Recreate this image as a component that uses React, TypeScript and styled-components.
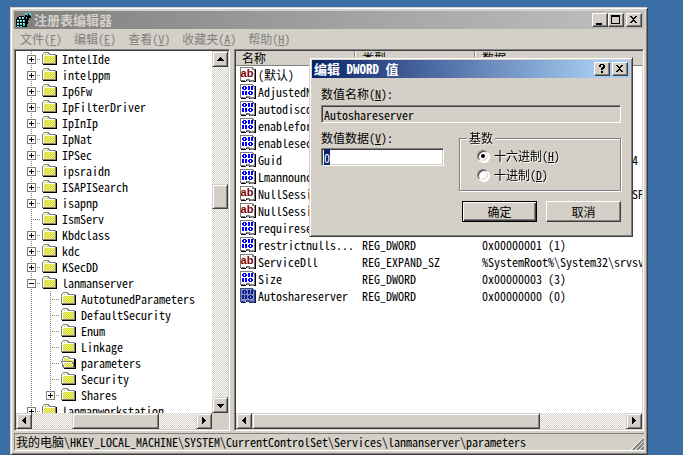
import React from "react";
import styled, { createGlobalStyle, css } from "styled-components";

const face = "#d4d0c8";
const shadow = "#808080";
const dark = "#404040";

const GlobalStyle = createGlobalStyle`
  *, *::before, *::after { box-sizing: border-box; }
  body { margin: 0; background: #3a6ea5; }
  body, button, input, table {
    font-family: "Noto Sans Mono CJK SC", "Noto Sans CJK SC", "Liberation Mono", monospace;
    font-size: 12px;
    line-height: 16px;
    color: #000;
  }
`;

const raised = css`
  border: 1px solid;
  border-color: ${face} ${dark} ${dark} ${face};
  box-shadow: inset 1px 1px 0 #fff, inset -1px -1px 0 ${shadow};
`;

const checker = css`
  background: conic-gradient(#fff 25%, ${face} 0 50%, #fff 0 75%, ${face} 0) 0 0 / 2px 2px;
`;

const Desktop = styled.div`
  position: relative;
  display: flex;
  min-height: 100vh;
  height: 100vh;
  padding: 7px 35px 0 10px;
  overflow: hidden;
`;

const Window = styled.main`
  flex: 1;
  min-width: 0;
  display: flex;
  flex-direction: column;
  padding: 3px;
  background: ${face};
  ${raised}
`;

const TitleBar = styled.header<{ $active?: boolean }>`
  display: flex;
  align-items: center;
  flex: none;
  height: 18px;
  padding: 0 2px;
  background: ${(p) =>
    p.$active
      ? "linear-gradient(90deg, #0a246a, #a6caf0 90%)"
      : "linear-gradient(90deg, #808080, #c0c0c0)"};
  color: ${(p) => (p.$active ? "#fff" : face)};
`;

const Title = styled.h1`
  flex: 1;
  margin: 0;
  font-size: 13px;
  line-height: 18px;
  font-weight: 700;
  white-space: nowrap;
`;

const AppIcon = styled.svg`
  flex: none;
  width: 16px;
  height: 16px;
  margin-right: 2px;
`;

const CaptionButton = styled.button<{ $apart?: boolean }>`
  display: flex;
  flex: none;
  width: 16px;
  height: 14px;
  padding: 0;
  margin-left: ${(p) => (p.$apart ? 2 : 0)}px;
  background: ${face};
  border: 1px solid;
  border-color: #fff ${dark} ${dark} #fff;
  box-shadow: inset -1px -1px 0 ${shadow};
`;

const MenuBar = styled.nav`
  display: flex;
  flex: none;
  height: 20px;
`;

const MenuItem = styled.button`
  padding: 0 6px;
  border: 0;
  background: none;
  color: ${shadow};
  line-height: 20px;
  white-space: nowrap;
`;

const Panes = styled.div`
  flex: 1;
  min-height: 0;
  display: flex;
  gap: 4px;
`;

const Pane = styled.section<{ $width?: number }>`
  flex: ${(p) => (p.$width ? `0 0 ${p.$width}px` : "1 1 0")};
  min-width: 0;
  display: grid;
  grid-template-columns: minmax(0, 1fr) auto;
  grid-template-rows: minmax(0, 1fr) 16px;
  background: #fff;
  border: 1px solid;
  border-color: ${shadow} #fff #fff ${shadow};
  padding: 1px;
  box-shadow: inset 1px 1px 0 ${dark}, inset -1px -1px 0 ${face};
`;

const PaneBody = styled.div`
  overflow: hidden;
`;

const Corner = styled.div`
  background: ${face};
`;

const Bar = styled.div<{ $vertical?: boolean }>`
  display: flex;
  flex-direction: ${(p) => (p.$vertical ? "column" : "row")};
  ${(p) => (p.$vertical ? "width: 16px;" : "height: 16px;")}
  ${checker}
`;

const ArrowButton = styled.button`
  display: flex;
  flex: none;
  width: 16px;
  height: 16px;
  padding: 0;
  background: ${face};
  ${raised}
`;

const Space = styled.div<{ $grow: number }>`
  flex: ${(p) => p.$grow} 1 0;
`;

const Thumb = styled.div<{ $grow: number }>`
  flex: ${(p) => p.$grow} 1 0;
  background: ${face};
  ${raised}
`;

const Tree = styled.ul`
  margin: 0;
  padding: 0 0 0 6px;
  list-style: none;
`;

const TreeItem = styled.li`
  display: flex;
  height: 16px;
  white-space: nowrap;
`;

const Guide = styled.span<{ $half?: boolean; $branch?: boolean }>`
  flex: none;
  display: flex;
  align-items: center;
  width: 19px;
  height: 16px;
  padding-left: 5px;
  background-image: repeating-linear-gradient(180deg, ${shadow} 0 1px, transparent 1px 2px),
    repeating-linear-gradient(90deg, ${shadow} 0 1px, transparent 1px 2px);
  background-repeat: no-repeat;
  background-position: 9px 0, 9px 8px;
  background-size: 1px ${(p) => (p.$half ? 8 : 16)}px, ${(p) => (p.$branch ? "10px 1px" : "0 0")};
`;

const Expander = styled.button`
  display: flex;
  width: 9px;
  height: 9px;
  margin-top: 1px;
  padding: 0;
  background: #fff;
  border: 1px solid ${shadow};
`;

const FolderArt = styled.svg`
  flex: none;
  width: 18px;
  height: 16px;
  margin-right: 3px;
`;

const Table = styled.table`
  width: 100%;
  table-layout: fixed;
  border-spacing: 0;
`;

const HeadCell = styled.th<{ $width?: number }>`
  width: ${(p) => (p.$width ? `${p.$width}px` : "auto")};
  height: 15px;
  padding: 0 6px;
  overflow: hidden;
  background: ${face};
  border-bottom: 1px solid ${shadow};
  box-shadow: ${(p) => (p.$width ? `inset -1px 0 0 #fff, inset -2px 0 0 ${shadow}` : "none")};
  line-height: 14px;
  font-weight: 400;
  text-align: left;
`;

const Cell = styled.td`
  height: 17px;
  padding: 0 0 0 6px;
  overflow: hidden;
  line-height: 17px;
  white-space: pre;
`;

const NameCell = styled(Cell)`
  padding-left: 4px;
`;

const NameBox = styled.span`
  display: flex;
  gap: 2px;
`;

const ValueArt = styled.svg`
  flex: none;
  width: 16px;
  height: 17px;
`;

const StatusBar = styled.footer`
  flex: none;
  display: flex;
  align-items: flex-end;
  justify-content: space-between;
  height: 18px;
  margin-top: 2px;
  padding-left: 1px;
  border: 1px solid;
  border-color: ${shadow} #fff #fff ${shadow};
  border-right: 0;
  white-space: nowrap;
`;

const Grip = styled.svg`
  flex: none;
  width: 13px;
  height: 13px;
`;

const Dialog = styled.div`
  position: absolute;
  top: 57px;
  left: 309px;
  width: 324px;
  padding: 2px;
  background: ${face};
  ${raised}
`;

const Form = styled.form`
  display: flex;
  flex-direction: column;
  padding: 8px 9px 12px;
`;

const Label = styled.label`
  height: 16px;
  white-space: nowrap;
`;

const Field = styled.input`
  width: 100%;
  height: 18px;
  padding: 0 2px;
  margin: 0;
  border: 1px solid;
  border-color: ${shadow} #fff #fff ${shadow};
  border-radius: 0;
  box-shadow: inset 1px 1px 0 ${dark}, inset -1px -1px 0 ${face};
  background: #fff;
  outline: none;
  &:read-only { background: ${face}; }
  &::selection { background: #0a246a; color: #fff; }
`;

const NameRow = styled.div`
  display: flex;
  flex-direction: column;
  gap: 3px;
`;

const DataRow = styled.div`
  display: flex;
  gap: 15px;
  margin-top: 7px;
`;

const DataColumn = styled.div`
  flex: 1;
  display: flex;
  flex-direction: column;
  gap: 2px;
`;

const Radix = styled.fieldset`
  width: 162px;
  height: 61px;
  margin: 0;
  padding: 0 17px;
  border: 1px solid ${shadow};
`;

const RadixFrame = styled.div`
  flex: none;
  filter: drop-shadow(1px 1px 0 #fff);
`;

const Legend = styled.legend`
  margin-left: -10px;
  padding: 0 2px;
`;

const Option = styled.label`
  display: flex;
  align-items: center;
  gap: 5px;
  height: 19px;
  white-space: nowrap;
`;

const Radio = styled.input`
  appearance: none;
  display: grid;
  place-items: center;
  width: 12px;
  height: 12px;
  margin: 0;
  border: 1px solid;
  border-color: ${shadow} #fff #fff ${shadow};
  border-radius: 50%;
  background: #fff;
  box-shadow: inset 1px 1px 0 ${dark}, inset -1px -1px 0 ${face};
  &:checked::before {
    content: "";
    width: 4px;
    height: 4px;
    border-radius: 50%;
    background: #000;
  }
`;

const Actions = styled.div`
  display: flex;
  justify-content: flex-end;
  gap: 9px;
  margin-top: 10px;
`;

const PushButton = styled.button<{ $default?: boolean }>`
  width: 75px;
  height: 21px;
  padding: 0;
  background: ${face};
  border: 1px solid;
  border-color: ${(p) => (p.$default ? "#000" : `#fff ${dark} ${dark} #fff`)};
  box-shadow: ${(p) =>
    p.$default
      ? `inset 1px 1px 0 #fff, inset -1px -1px 0 ${dark}, inset -2px -2px 0 ${shadow}`
      : `inset -1px -1px 0 ${shadow}`};
`;

const glyphs = {
  up: "M7 5h1v1h1v1h1v1h1v1H4V8h1V7h1V6h1z",
  down: "M4 6h7v1h-1v1H9v1H8v1H7V9H6V8H5V7H4z",
  left: "M8 3h1v7H8V9H7V8H6V7H5V6h1V5h1V4h1z",
  right: "M5 3h1v1h1v1h1v1h1v1H8v1H7v1H6v1H5z",
  min: "M3 9h6v2H3z",
  max: "M2 1h9v9H2zM3 3v6h7V3z",
  close: "M3 2h2v1h1v1h1V3h1V2h2v1H9v1H8v1H7v1h1v1h1v1h1v1H8V8H7V7H6v1H5v1H3V8h1V7h1V6h1V5H5V4H4V3H3z",
  help: "M5 1h4v1h1v3H9v1H8v1H6V5h1V4h1V2H6v2H4V2h1zM6 8h2v2H6z",
};

const Glyph = ({ kind }: { kind: keyof typeof glyphs }) => (
  <svg width="14" height="12" viewBox="0 0 14 12" overflow="visible" shapeRendering="crispEdges">
    <path d={glyphs[kind]} fillRule="evenodd" />
  </svg>
);

const Folder = ({ open }: { open?: boolean }) => (
  <FolderArt viewBox="0 0 18 16" shapeRendering="crispEdges" aria-hidden="true">
    <defs>
      <pattern id="weave" width="2" height="2" patternUnits="userSpaceOnUse">
        <path d="M0 0h2v2H0z" fill="#ff0" />
        <path d="M1 0h1v1H1zM0 1h1v1H0z" fill="#c8c8b0" />
      </pattern>
    </defs>
    {open ? (
      <>
        <path d="M3 1h6v1h1v1h5v10H3V12H2V3h1z" fill={shadow} />
        <path d="M4 2h4v1h1v1h5v3H3V3h1z" fill="#fff" />
        <path d="M4 3h4v1h1v1h5v2H4z" fill="url(#weave)" />
        <path d="M14 4h2v10H4v-1h10z" fill="#000" />
        <path d="M1 6h11v1h1v2h1v3h1v1H4v-1H3v-2H2V8H1z" fill={shadow} />
        <path d="M2 7h10v2h1v3H4v-2H3V8H2z" fill="#fff" />
        <path d="M4 8h8v2h1v2H5v-2H4z" fill="url(#weave)" />
      </>
    ) : (
      <>
        <path d="M2 4h14v10H2z" fill="#000" />
        <path d="M3 1h5v1h1v1h6v10H1V3h1V2h1z" fill={shadow} />
        <path d="M3 2h4v1h1v1h6v8H2V3h1z" fill="#fff" />
        <path d="M3 3h4v1H3zM3 5h11v7H3z" fill="url(#weave)" />
      </>
    )}
  </FolderArt>
);

const ValueIcon = ({ kind, selected }: { kind: "ab" | "bin"; selected?: boolean }) => {
  const ink = selected ? "#0a1a90" : "#0000ff";
  return (
    <ValueArt viewBox="0 0 16 17" shapeRendering="crispEdges" aria-hidden="true">
      <path d="M1 15h5v1H1zM6 14h3v1H6zM9 15h4v1H9zM14 3h2v13h-3v-1h1z" fill={selected ? "#0a1a50" : "#000"} />
      <path d="M0 1h13v1h1v1h1v12h-1v1h-4v-1H7v-1H5v1H0z" fill={selected ? "#3a4a88" : shadow} />
      <path d="M1 2h11v2h2v10h-4v-1H6v1H1z" fill={selected ? "#8090c0" : "#fff"} />
      {kind === "ab" ? (
        <text
          x="7"
          y="11"
          textAnchor="middle"
          fontFamily="Liberation Sans, sans-serif"
          fontWeight="700"
          fontSize="11"
          fill="#800000"
        >
          ab
        </text>
      ) : (
        <path
          fill={ink}
          fillRule="evenodd"
          d="M3 3h3v1h1v2H6v1H3V6H2V4h1zM4 4v2h1V4zM8 3h2v4H8zM11 3h2v4h-2zM2 8h2v4H2zM5 8h2v4H5zM9 8h3v1h1v2h-1v1H9v-1H8V9h1zM10 9v2h1V9z"
        />
      )}
    </ValueArt>
  );
};

const ScrollBar = ({ vertical, parts }: { vertical?: boolean; parts: [number, number, number] }) => (
  <Bar $vertical={vertical}>
    <ArrowButton type="button" aria-label={vertical ? "向上" : "向左"}>
      <Glyph kind={vertical ? "up" : "left"} />
    </ArrowButton>
    <Space $grow={parts[0]} />
    <Thumb $grow={parts[1]} />
    <Space $grow={parts[2]} />
    <ArrowButton type="button" aria-label={vertical ? "向下" : "向右"}>
      <Glyph kind={vertical ? "down" : "right"} />
    </ArrowButton>
  </Bar>
);

const menus = [
  ["文件", "F"],
  ["编辑", "E"],
  ["查看", "V"],
  ["收藏夹", "A"],
  ["帮助", "H"],
];

type Node = { name: string; sign?: "+" | "-"; child?: boolean; open?: boolean; last?: boolean };

const nodes: Node[] = [
  { name: "IntelIde", sign: "+" },
  { name: "intelppm", sign: "+" },
  { name: "Ip6Fw", sign: "+" },
  { name: "IpFilterDriver", sign: "+" },
  { name: "IpInIp", sign: "+" },
  { name: "IpNat", sign: "+" },
  { name: "IPSec", sign: "+" },
  { name: "ipsraidn", sign: "+" },
  { name: "ISAPISearch", sign: "+" },
  { name: "isapnp", sign: "+" },
  { name: "IsmServ" },
  { name: "Kbdclass", sign: "+" },
  { name: "kdc", sign: "+" },
  { name: "KSecDD", sign: "+" },
  { name: "lanmanserver", sign: "-" },
  { name: "AutotunedParameters", child: true },
  { name: "DefaultSecurity", child: true },
  { name: "Enum", child: true },
  { name: "Linkage", child: true },
  { name: "parameters", child: true, open: true },
  { name: "Security", child: true },
  { name: "Shares", child: true, sign: "+", last: true },
  { name: "lanmanworkstation", sign: "+" },
];

type Value = { kind: "ab" | "bin"; name: string; type: string; data: string; selected?: boolean };

const values: Value[] = [
  { kind: "ab", name: "(默认)", type: "REG_SZ", data: "(数值未设置)" },
  { kind: "bin", name: "AdjustedNulls...", type: "REG_DWORD", data: "0x00000001 (1)" },
  { kind: "bin", name: "autodisconnect", type: "REG_DWORD", data: "0x0000000f (15)" },
  { kind: "bin", name: "enableforced...", type: "REG_DWORD", data: "0x00000000 (0)" },
  { kind: "bin", name: "enablesecuri...", type: "REG_DWORD", data: "0x00000000 (0)" },
  { kind: "bin", name: "Guid", type: "REG_BINARY", data: "a1 5c 90 3e b7 42 d8 11 94 0f" },
  { kind: "bin", name: "Lmannounce", type: "REG_DWORD", data: "0x00000000 (0)" },
  { kind: "ab", name: "NullSessionP...", type: "REG_MULTI_SZ", data: "COMNAP COMNODE SQL\\QUERY SPOOLSS" },
  { kind: "ab", name: "NullSessionS...", type: "REG_MULTI_SZ", data: "COMCFG DFS$" },
  { kind: "bin", name: "requiresecur...", type: "REG_DWORD", data: "0x00000000 (0)" },
  { kind: "bin", name: "restrictnulls...", type: "REG_DWORD", data: "0x00000001 (1)" },
  { kind: "ab", name: "ServiceDll", type: "REG_EXPAND_SZ", data: "%SystemRoot%\\System32\\srvsvc.dll" },
  { kind: "bin", name: "Size", type: "REG_DWORD", data: "0x00000003 (3)" },
  { kind: "bin", name: "Autoshareserver", type: "REG_DWORD", data: "0x00000000 (0)", selected: true },
];

const selectAll = (el: HTMLInputElement | null) => {
  if (el) {
    el.focus();
    el.select();
  }
};

export default function App() {
  return (
    <Desktop>
      <GlobalStyle />
      <Window>
        <TitleBar>
          <AppIcon viewBox="0 0 16 16" shapeRendering="crispEdges" aria-hidden="true">
            <path d="M3 4h5v1h2v3h1v7H0V7h1V5h2z" fill="#000" />
            <path d="M9 1h2v3h1V2h2v2h1v2h-2v2h-1v4h-1v2h-1V6H9z" fill="#000" />
            <path
              fill="#2fe0e0"
              d="M3 5h2v2H3zM6 5h2v2H6zM1 8h2v2H1zM4 8h2v2H4zM7 8h2v2H7zM1 11h2v2H1zM4 11h2v2H4zM7 11h2v3H7zM1 14h2v1H1zM4 14h2v1H4zM9 1h2v2H9zM13 1h2v2h-2zM10 5h1v2h-1z"
            />
            <path fill="#fff" d="M3 5h1v1H3zM6 5h1v1H6zM1 8h1v1H1zM4 8h1v1H4zM7 8h1v1H7zM1 11h1v1H1zM4 11h1v1H4zM7 11h1v1H7z" />
          </AppIcon>
          <Title>注册表编辑器</Title>
          <CaptionButton type="button" aria-label="最小化">
            <Glyph kind="min" />
          </CaptionButton>
          <CaptionButton type="button" aria-label="最大化">
            <Glyph kind="max" />
          </CaptionButton>
          <CaptionButton type="button" aria-label="关闭" $apart>
            <Glyph kind="close" />
          </CaptionButton>
        </TitleBar>
        <MenuBar>
          {menus.map(([name, key]) => (
            <MenuItem type="button" key={key}>
              {name}(<u>{key}</u>)
            </MenuItem>
          ))}
        </MenuBar>
        <Panes>
          <Pane $width={216}>
            <PaneBody>
              <Tree>
                {nodes.map((n) => {
                  const box = n.sign && (
                    <Expander type="button" aria-label={n.sign === "+" ? "展开" : "折叠"}>
                      <svg width="7" height="7" viewBox="0 0 7 7" shapeRendering="crispEdges">
                        <path d={n.sign === "+" ? "M1 3h5v1H1zM3 1h1v5H3z" : "M1 3h5v1H1z"} />
                      </svg>
                    </Expander>
                  );
                  return (
                    <TreeItem key={n.name}>
                      <Guide $branch={!n.child}>{!n.child && box}</Guide>
                      {n.child && (
                        <Guide $branch $half={n.last}>
                          {box}
                        </Guide>
                      )}
                      <Folder open={n.open} />
                      {n.name}
                    </TreeItem>
                  );
                })}
              </Tree>
            </PaneBody>
            <ScrollBar vertical parts={[118, 23, 189]} />
            <ScrollBar parts={[40, 87, 37]} />
            <Corner />
          </Pane>
          <Pane>
            <PaneBody>
              <Table>
                <thead>
                  <tr>
                    <HeadCell $width={120}>名称</HeadCell>
                    <HeadCell $width={120}>类型</HeadCell>
                    <HeadCell>数据</HeadCell>
                  </tr>
                </thead>
                <tbody>
                  {values.map((v) => (
                    <tr key={v.name}>
                      <NameCell>
                        <NameBox>
                          <ValueIcon kind={v.kind} selected={v.selected} />
                          {v.name}
                        </NameBox>
                      </NameCell>
                      <Cell>{v.type}</Cell>
                      <Cell>{v.data}</Cell>
                    </tr>
                  ))}
                </tbody>
              </Table>
            </PaneBody>
            <div />
            <ScrollBar parts={[0, 288, 86]} />
          </Pane>
        </Panes>
        <StatusBar>
          <span>我的电脑\HKEY_LOCAL_MACHINE\SYSTEM\CurrentControlSet\Services\lanmanserver\parameters</span>
          <Grip viewBox="0 0 13 13" aria-hidden="true">
            <path d="M0 13L13 0M4 13l9-9M8 13l5-5" stroke="#fff" />
            <path d="M2 13L13 2M6 13l7-7M10 13l3-3" stroke={shadow} strokeWidth="2" />
          </Grip>
        </StatusBar>
      </Window>

      <Dialog role="dialog" aria-labelledby="dialog-title">
        <TitleBar $active>
          <Title id="dialog-title">编辑 DWORD 值</Title>
          <CaptionButton type="button" aria-label="帮助">
            <Glyph kind="help" />
          </CaptionButton>
          <CaptionButton type="button" aria-label="关闭" $apart>
            <Glyph kind="close" />
          </CaptionButton>
        </TitleBar>
        <Form onSubmit={(e) => e.preventDefault()}>
          <NameRow>
            <Label htmlFor="value-name">
              数值名称(<u>N</u>):
            </Label>
            <Field id="value-name" readOnly defaultValue="Autoshareserver" />
          </NameRow>
          <DataRow>
            <DataColumn>
              <Label htmlFor="value-data">
                数值数据(<u>V</u>):
              </Label>
              <Field id="value-data" ref={selectAll} defaultValue="0" />
            </DataColumn>
            <RadixFrame>
              <Radix>
                <Legend>基数</Legend>
                <Option>
                  <Radio type="radio" name="radix" defaultChecked />
                  <span>
                    十六进制(<u>H</u>)
                  </span>
                </Option>
                <Option>
                  <Radio type="radio" name="radix" />
                  <span>
                    十进制(<u>D</u>)
                  </span>
                </Option>
              </Radix>
            </RadixFrame>
          </DataRow>
          <Actions>
            <PushButton type="submit" $default>
              确定
            </PushButton>
            <PushButton type="button">取消</PushButton>
          </Actions>
        </Form>
      </Dialog>
    </Desktop>
  );
}
